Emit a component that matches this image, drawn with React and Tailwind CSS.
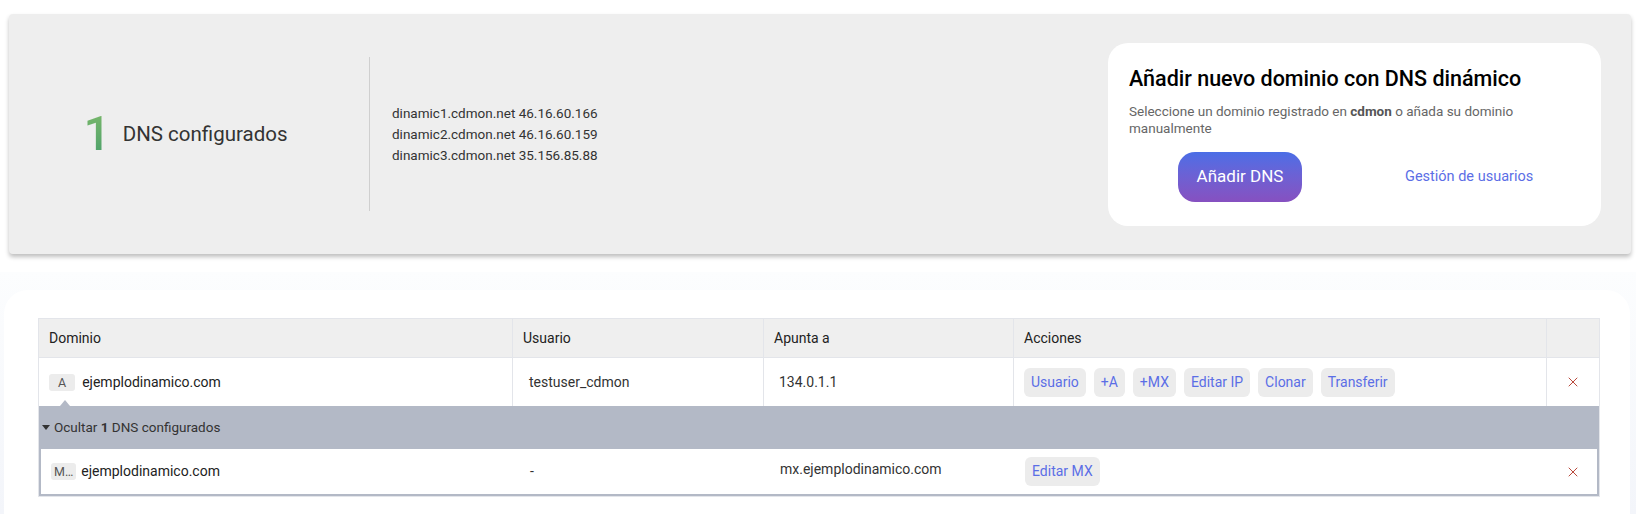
import { X } from 'lucide-react'

const actions = ['Usuario', '+A', '+MX', 'Editar IP', 'Clonar', 'Transferir']
const dnsList = ['dinamic1.cdmon.net 46.16.60.166', 'dinamic2.cdmon.net 46.16.60.159', 'dinamic3.cdmon.net 35.156.85.88']
const cols = 'grid grid-cols-[474px_251px_250px_533px_1fr]'

function ActionBtn({ children }) {
  return (
    <span className="flex h-[29px] items-center rounded-md bg-[#ececec] px-[7px] text-[14px] text-[#5b6ee6]">
      {children}
    </span>
  )
}

function Remove() {
  return (
    <div className="flex items-center justify-center text-[#b94a3c]">
      <X size={16} strokeWidth={1.5} />
    </div>
  )
}

export default function App() {
  return (
    <div className="min-h-[514px] bg-white font-['Roboto',sans-serif] text-[#222]">
      {/* summary panel */}
      <div className="pl-[9px] pr-[5px] pt-[14px]">
        <div className="flex h-[240px] items-center rounded-[4px] bg-[#eeeeee] shadow-[0_3px_4px_rgba(0,0,0,0.25)]">
          <div className="flex w-[360px] items-center justify-center gap-[12px] pr-[7px]">
            <span className="bg-gradient-to-b from-[#7ab86a] to-[#48a06a] bg-clip-text text-[48px] font-medium leading-none text-transparent">1</span>
            <span className="text-[20.5px] text-[#333]">DNS configurados</span>
          </div>
          <div className="h-[154px] w-px bg-[#cfcfcf]" />
          <div className="ml-[22px] flex flex-col text-[13.5px] leading-[21px] text-[#333]">
            {dnsList.map((d) => (
              <span key={d}>{d}</span>
            ))}
          </div>
          <div className="ml-auto mr-[30px] h-[183px] w-[493px] rounded-[20px] bg-white px-[21px] pt-[22px]">
            <h2 className="text-[21.5px] font-medium leading-[28px] text-black">Añadir nuevo dominio con DNS dinámico</h2>
            <p className="mt-[10px] text-[13.5px] leading-[17px] text-[#666]">
              Seleccione un dominio registrado en <b className="font-bold text-[#555]">cdmon</b> o añada su dominio manualmente
            </p>
            <div className="mt-[15px] flex items-center">
              <button className="ml-[49px] h-[50px] w-[124px] rounded-[17px] bg-gradient-to-b from-[#4a6ee6] to-[#8650c0] text-[17px] text-white">
                Añadir DNS
              </button>
              <span className="ml-[103px] text-[14.5px] text-[#5b6ee6]">Gestión de usuarios</span>
            </div>
          </div>
        </div>
      </div>

      {/* table card */}
      <div className="mt-[18px] bg-gradient-to-b from-[#fcfdfe] to-[#f3f5fa] pl-[4px] pr-[6px] pt-[18px]">
        <div className="min-h-[224px] rounded-t-[24px] bg-white pl-[34px] pt-[28px]">
          <div className="w-[1562px] border border-[#e3e5ea] text-[14px]">
            <div className={`${cols} h-[38px] bg-[#efefef]`}>
              <div className="flex items-center border-r border-[#e3e5ea] px-[10px]">Dominio</div>
              <div className="flex items-center border-r border-[#e3e5ea] px-[10px]">Usuario</div>
              <div className="flex items-center border-r border-[#e3e5ea] px-[10px]">Apunta a</div>
              <div className="flex items-center border-r border-[#e3e5ea] px-[10px]">Acciones</div>
              <div />
            </div>
            <div className={`${cols} h-[49px] border-t border-[#e3e5ea] bg-white`}>
              <div className="relative flex items-center border-r border-[#e3e5ea] px-[10px]">
                <span className="rounded-[3px] bg-[#ececec] px-[9px] text-[12.5px] leading-[17px] text-[#555]">A</span>
                <span className="ml-[7px]">ejemplodinamico.com</span>
                <span className="absolute bottom-0 left-[21px] h-0 w-0 border-x-[5px] border-b-[6px] border-x-transparent border-b-[#b3b9c6]" />
              </div>
              <div className="flex items-center border-r border-[#e3e5ea] px-[16px] text-[#333]">testuser_cdmon</div>
              <div className="flex items-center border-r border-[#e3e5ea] px-[15px] text-[#333]">134.0.1.1</div>
              <div className="flex items-center gap-[8px] border-r border-[#e3e5ea] px-[10px]">
                {actions.map((a) => (
                  <ActionBtn key={a}>{a}</ActionBtn>
                ))}
              </div>
              <Remove />
            </div>
            <div className="flex h-[43px] items-center bg-[#b3b9c6] pl-[3px] text-[13.5px] text-[#333]">
              <svg width="8" height="6" viewBox="0 0 8 6" className="mr-[4px]">
                <path d="M0 0h8L4 5z" fill="#333" />
              </svg>
              Ocultar&nbsp;<b className="font-bold">1</b>&nbsp;DNS configurados
            </div>
            <div className={`${cols} h-[47px] border-x-2 border-b-2 border-[#b3b9c6] bg-white`}>
              <div className="flex items-center px-[10px]">
                <span className="rounded-[3px] bg-[#ececec] px-[3px] text-[12.5px] leading-[17px] text-[#555]">M…</span>
                <span className="ml-[5px]">ejemplodinamico.com</span>
              </div>
              <div className="flex items-center px-[15px] text-[#333]">-</div>
              <div className="flex items-center px-[14px] pb-[4px] text-[#333]">mx.ejemplodinamico.com</div>
              <div className="flex items-center px-[9px]">
                <ActionBtn>Editar MX</ActionBtn>
              </div>
              <Remove />
            </div>
          </div>
        </div>
      </div>
    </div>
  )
}
